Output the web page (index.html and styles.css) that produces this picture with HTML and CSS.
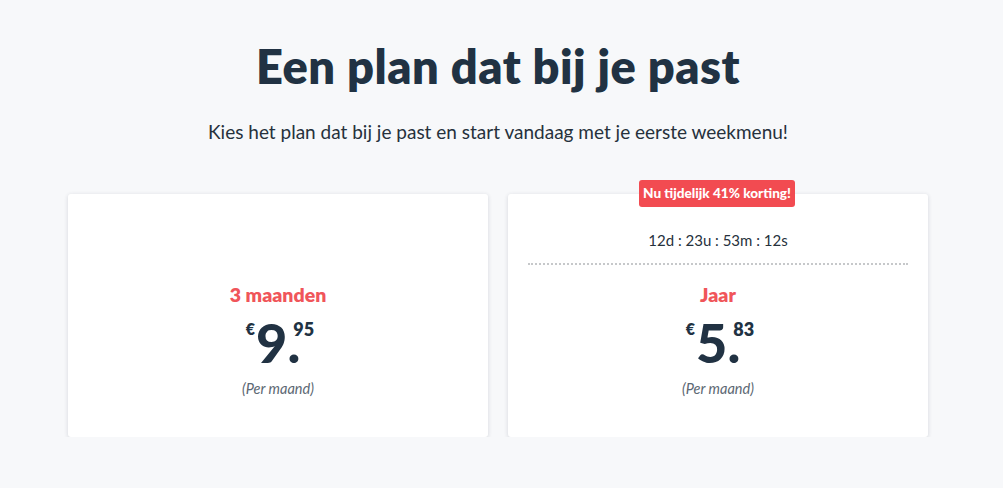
FILE: index.html
```html
<!DOCTYPE html>
<html lang="nl">
<head>
<meta charset="utf-8">
<link rel="stylesheet" href="styles.css">
</head>
<body>
<main class="page">
  <h1 class="title">Een plan dat bij je past</h1>
  <p class="subtitle">Kies het plan dat bij je past en start vandaag met je eerste weekmenu!</p>
  <div class="plans">
    <div class="card">
      <div class="timer timer-empty" aria-hidden="true"></div>
      <div class="name">3 maanden</div>
      <div class="price"><span class="cur">€</span><span class="whole">9.</span><span class="cents">95</span></div>
      <div class="per">(Per maand)</div>
    </div>
    <div class="card">
      <div class="badge">Nu tijdelijk 41% korting!</div>
      <div class="timer">12d : 23u : 53m : 12s</div>
      <div class="name">Jaar</div>
      <div class="price"><span class="cur">€</span><span class="whole">5.</span><span class="cents">83</span></div>
      <div class="per">(Per maand)</div>
    </div>
  </div>
</main>
</body>
</html>
```
FILE: styles.css
```css
* { box-sizing: border-box; }
html, body { margin: 0; padding: 0; }
body {
  background: #f7f8fa;
  color: #213243;
  font-family: "Lato", "Noto Sans", sans-serif;
}
.page {
  width: 996px;
  padding-top: 36px;
  display: flex;
  flex-direction: column;
  align-items: center;
}
.title {
  margin: 0;
  font-size: 47px;
  font-weight: 800;
  line-height: 60px;
  letter-spacing: 0.5px;
}
.subtitle {
  margin: 23px 0 0;
  font-size: 19px;
  line-height: 26px;
  color: #26313c;
}
.plans {
  margin-top: 49px;
  display: flex;
  gap: 20px;
}
.card {
  position: relative;
  width: 420px;
  height: 243px;
  background: #fff;
  border-radius: 3px;
  box-shadow: 0 1px 4px rgba(30, 40, 60, 0.16);
  padding: 0 20px;
  display: flex;
  flex-direction: column;
  align-items: center;
}
.badge {
  position: absolute;
  top: -14px;
  left: 131px;
  height: 27px;
  padding: 0 4px;
  background: #f24b51;
  color: #fff;
  border-radius: 3px;
  font-size: 13.6px;
  font-weight: 900;
  line-height: 27px;
  white-space: nowrap;
}
.timer {
  align-self: stretch;
  margin-top: 35px;
  height: 36px;
  padding-bottom: 12px;
  text-align: center;
  font-family: "Lato", sans-serif;
  font-size: 15px;
  line-height: 22px;
  color: #26313c;
  border-bottom: 2px dotted #c6c8ca;
}
.timer-empty { border-bottom-color: transparent; }
.name {
  margin-top: 18px;
  font-size: 19.5px;
  font-weight: 800;
  line-height: 24px;
  color: #f0555a;
}
.price {
  margin-top: 11px;
  display: flex;
  align-items: flex-start;
  height: 48px;
  line-height: 1;
  color: #213243;
  padding-left: 4px;
}
.cur {
  font-size: 16px;
  font-weight: 800;
  margin-top: 3px;
  margin-right: 1px;
}
.whole {
  font-size: 54px;
  font-weight: 900;
  line-height: 48px;
  margin-top: 1px;
}
.cents {
  font-size: 18px;
  font-weight: 800;
  margin-top: 2px;
  margin-left: -7px;
}
.per {
  margin-top: 14px;
  font-size: 14.5px;
  font-style: italic;
  color: #5c6873;
  line-height: 18px;
}
```
